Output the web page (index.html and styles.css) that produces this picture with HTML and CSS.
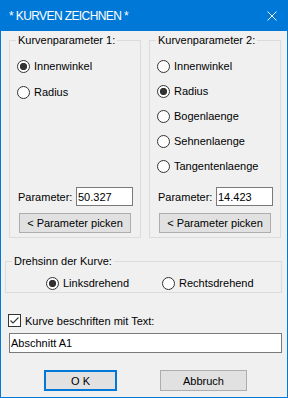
FILE: index.html
```html
<!DOCTYPE html>
<html lang="de">

<head>
    <meta charset="UTF-8">
    <meta name="viewport" content="width=device-width, initial-scale=1.0">
    <title>Kurven zeichnen</title>
    <link rel="stylesheet" href="styles.css">
</head>

<body>
    <div class="window">
        <div class="titlebar">
            <span class="title">* KURVEN ZEICHNEN *</span>
            <svg class="close" width="10" height="10" viewBox="0 0 10 10">
                <path d="M0.5 0.5L9.5 9.5M9.5 0.5L0.5 9.5" stroke="#ffffff" stroke-width="1" fill="none" />
            </svg>
        </div>

        <div class="content">
            <div class="groups">
                <fieldset class="group param-group">
                    <legend>Kurvenparameter 1:</legend>
                    <div class="options options-1">
                        <div class="radio"><span class="circle checked"></span>Innenwinkel</div>
                        <div class="radio"><span class="circle"></span>Radius</div>
                    </div>
                    <div class="param-row">
                        <span class="param-label">Parameter:</span>
                        <span class="field param-field">50.327</span>
                    </div>
                    <button class="btn pick" type="button">&lt; Parameter picken</button>
                </fieldset>

                <fieldset class="group param-group">
                    <legend>Kurvenparameter 2:</legend>
                    <div class="options options-2">
                        <div class="radio"><span class="circle"></span>Innenwinkel</div>
                        <div class="radio"><span class="circle checked"></span>Radius</div>
                        <div class="radio"><span class="circle"></span>Bogenlaenge</div>
                        <div class="radio"><span class="circle"></span>Sehnenlaenge</div>
                        <div class="radio"><span class="circle"></span>Tangentenlaenge</div>
                    </div>
                    <div class="param-row">
                        <span class="param-label">Parameter:</span>
                        <span class="field param-field">14.423</span>
                    </div>
                    <button class="btn pick" type="button">&lt; Parameter picken</button>
                </fieldset>
            </div>

            <fieldset class="group turn-group">
                <legend>Drehsinn der Kurve:</legend>
                <div class="turn-row">
                    <div class="radio left-turn"><span class="circle checked"></span>Linksdrehend</div>
                    <div class="radio"><span class="circle"></span>Rechtsdrehend</div>
                </div>
            </fieldset>

            <div class="check-row">
                <span class="checkbox">
                    <svg width="11" height="11" viewBox="0 0 11 11">
                        <path d="M1.5 5.5L4 8L9.5 2.5" stroke="#333333" stroke-width="1.1" fill="none" />
                    </svg>
                </span>
                Kurve beschriften mit Text:
            </div>

            <div class="field text-field">Abschnitt A1</div>

            <div class="buttons">
                <button class="btn ok" type="button">O K</button>
                <button class="btn cancel" type="button">Abbruch</button>
            </div>
        </div>
    </div>
</body>

</html>
```

FILE: styles.css
```css
* {
    box-sizing: border-box;
}

body {
    margin: 0;
    background-color: #ffffff;
    font-family: "Liberation Sans", Arial, sans-serif;
    font-size: 11px;
    color: #000000;
}

.window {
    width: 288px;
    height: 398px;
    border: 1px solid #0078d7;
    border-top: none;
    background-color: #f0f0f0;
}

.titlebar {
    height: 31px;
    background-color: #0078d7;
    color: #ffffff;
    display: flex;
    align-items: center;
    justify-content: space-between;
    padding: 0 10px 0 8px;
}

.title {
    font-size: 12px;
    letter-spacing: -0.6px;
}

.content {
    padding: 3px 5px 0 4px;
}

.groups {
    display: flex;
    gap: 8px;
    margin-left: 4px;
}

.group {
    margin: 0;
    padding: 0;
    min-width: 0;
    border: 1px solid #dcdcdc;
}

.group legend {
    margin-left: 6px;
    padding: 0 2px;
    line-height: 13px;
}

.param-group {
    width: 132px;
    height: 204px;
    display: flex;
    flex-direction: column;
    padding-bottom: 4px;
}

.options {
    display: flex;
    flex-direction: column;
    padding-top: 13px;
    margin-left: 7px;
}

.options-1 {
    gap: 13px;
}

.options-2 {
    gap: 12px;
}

.radio {
    display: flex;
    align-items: center;
    gap: 4px;
    height: 13px;
    line-height: 13px;
    white-space: nowrap;
}

.circle {
    width: 13px;
    height: 13px;
    border: 1px solid #333333;
    border-radius: 50%;
    background-color: #ffffff;
    flex: none;
}

.circle.checked {
    background: radial-gradient(circle, #333333 0 3.4px, #ffffff 3.9px);
}

.param-row {
    margin-top: auto;
    margin-left: 8px;
    display: flex;
    align-items: center;
    height: 19px;
}

.param-label {
    width: 58px;
}

.field {
    background-color: #ffffff;
    border: 1px solid #7a7a7a;
    display: flex;
    align-items: center;
}

.param-field {
    width: 57px;
    height: 19px;
    padding-left: 1px;
}

.btn {
    font-family: "Liberation Sans", Arial, sans-serif;
    font-size: 11px;
    color: #000000;
    background-color: #e1e1e1;
    border: 1px solid #adadad;
    padding: 0;
}

.pick {
    width: 112px;
    height: 20px;
    margin: 7px 0 0 9px;
}

.turn-group {
    height: 38px;
    margin-top: 17px;
    padding: 9px 0 2px 0;
}

.turn-row {
    display: flex;
    margin-left: 40px;
}

.left-turn {
    width: 116px;
}

.check-row {
    display: flex;
    align-items: center;
    gap: 4px;
    height: 13px;
    margin: 21px 0 0 3px;
}

.checkbox {
    width: 13px;
    height: 13px;
    border: 1px solid #333333;
    background-color: #ffffff;
    display: flex;
}

.text-field {
    height: 20px;
    margin: 6px 0 0 4px;
    padding-left: 1px;
}

.buttons {
    display: flex;
    gap: 43px;
    margin: 17px 0 0 39px;
}

.buttons .btn {
    height: 21px;
}

.ok {
    width: 73px;
    border: 2px solid #0078d7;
}

.cancel {
    width: 87px;
}
```
